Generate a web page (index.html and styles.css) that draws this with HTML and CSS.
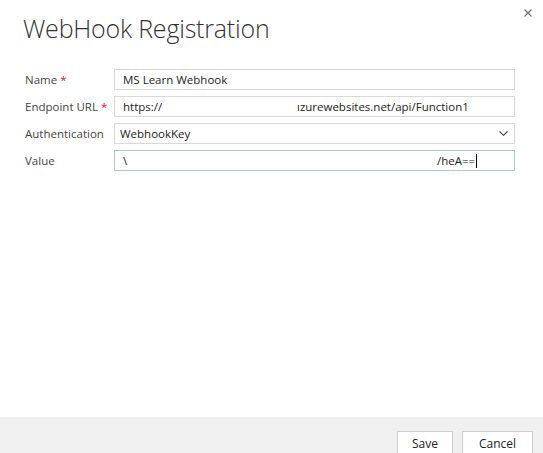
FILE: index.html
```html
<!DOCTYPE html>
<html lang="en">
<head>
<meta charset="utf-8">
<title>WebHook Registration</title>
<link rel="stylesheet" href="styles.css">
</head>
<body>
<div class="dialog">
  <button class="close" aria-label="Close">
    <svg width="8" height="8" viewBox="0 0 8 8"><path d="M0.5 0.5L7.5 7.5M7.5 0.5L0.5 7.5" stroke="#6b6b6b" stroke-width="1.1" fill="none"/></svg>
  </button>
  <main class="content">
    <h1 class="title">WebHook Registration</h1>
    <div class="form">
      <label class="label">Name <span class="req">*</span></label>
      <div class="field"><span class="val">MS Learn Webhook</span></div>

      <label class="label">Endpoint URL <span class="req">*</span></label>
      <div class="field"><span class="val head url-head">https://</span><span class="val">ızurewebsites.net/api/Function1</span></div>

      <label class="label">Authentication</label>
      <div class="field select"><span class="val sel-val">WebhookKey</span>
        <svg class="chev" width="9" height="5" viewBox="0 0 9 5"><path d="M0.5 0.5L4.5 4.3L8.5 0.5" stroke="#444" stroke-width="1.1" fill="none"/></svg>
      </div>

      <label class="label">Value</label>
      <div class="field focus"><span class="val head key-head">\</span><span class="val">/heA==</span><span class="caret"></span></div>
    </div>
  </main>
  <footer class="footer">
    <button class="btn">Save</button>
    <button class="btn cancel">Cancel</button>
  </footer>
</div>
</body>
</html>
```
FILE: styles.css
```css
html, body {
  margin: 0;
  padding: 0;
  background: #fff;
}
body {
  font-family: "Open Sans", "Noto Sans", "Liberation Sans", sans-serif;
  font-size: 11.5px;
  color: #444;
}
.dialog {
  position: relative;
  height: 453px;
  display: flex;
  flex-direction: column;
  overflow: hidden;
}
.close {
  position: absolute;
  top: 9px;
  right: 11px;
  padding: 0;
  border: 0;
  background: transparent;
  width: 8px;
  height: 8px;
  display: flex;
}
.content {
  flex: 1;
  padding: 0 28px 0 24px;
}
.title {
  margin: 11px 0 0 -1px;
  font-family: "Open Sans", "Noto Sans", sans-serif;
  font-size: 25px;
  font-weight: 300;
  line-height: 34px;
  color: #333;
  letter-spacing: -0.2px;
}
.form {
  margin-top: 24px;
  display: grid;
  grid-template-columns: 90px 401px;
  grid-auto-rows: 21px;
  row-gap: 6px;
}
.label {
  display: flex;
  align-items: center;
  padding-left: 1px;
  color: #444;
  white-space: nowrap;
}
.req {
  color: #e81123;
  margin-left: 3px;
}
.field {
  box-sizing: border-box;
  border: 1px solid #d8d8d8;
  display: flex;
  align-items: center;
  padding: 0 8px;
  color: #222;
  white-space: nowrap;
}
.val {
  line-height: 19px;
}
.head {
  flex: none;
}
.url-head {
  width: 174px;
}
.key-head {
  width: 314px;
}
.select {
  padding-left: 5px;
  justify-content: space-between;
  padding-right: 6px;
}
.chev {
  display: block;
}
.focus {
  border-color: #a7c6df;
}
.caret {
  width: 1px;
  height: 14px;
  background: #000;
  margin-left: 1px;
}
.footer {
  height: 36px;
  background: #f0f0f0;
  display: flex;
  justify-content: flex-end;
  align-items: flex-start;
  gap: 9px;
  padding: 14px 10px 0 0;
  box-sizing: border-box;
}
.btn {
  font-family: inherit;
  font-size: 12px;
  color: #222;
  background: #fff;
  border: 1px solid #cfcfcf;
  width: 56px;
  height: 24px;
  padding: 0;
  margin: 0;
}
.cancel {
  width: 71px;
}
```
